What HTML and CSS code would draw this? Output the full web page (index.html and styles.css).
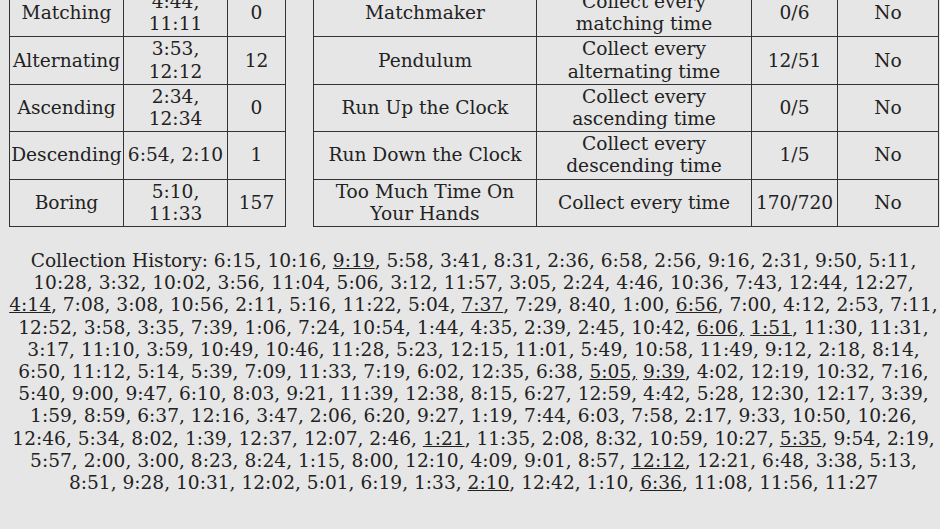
FILE: index.html
```html
<!DOCTYPE html>
<html>
<head>
<meta charset="utf-8">
<link rel="stylesheet" href="styles.css">
</head>
<body>
<div class="page">
  <div class="tables">
    <table class="tbl tbl-left">
      <colgroup><col class="c1"><col class="c2"><col class="c3"></colgroup>
      <tr><td>Matching</td><td>4:44,<br>11:11</td><td>0</td></tr>
      <tr><td>Alternating</td><td>3:53,<br>12:12</td><td>12</td></tr>
      <tr><td>Ascending</td><td>2:34,<br>12:34</td><td>0</td></tr>
      <tr><td>Descending</td><td>6:54, 2:10</td><td>1</td></tr>
      <tr><td>Boring</td><td>5:10,<br>11:33</td><td>157</td></tr>
    </table>
    <table class="tbl tbl-right">
      <colgroup><col class="r1"><col class="r2"><col class="r3"><col class="r4"></colgroup>
      <tr><td>Matchmaker</td><td>Collect every<br>matching time</td><td>0/6</td><td>No</td></tr>
      <tr><td>Pendulum</td><td>Collect every<br>alternating time</td><td>12/51</td><td>No</td></tr>
      <tr><td>Run Up the Clock</td><td>Collect every<br>ascending time</td><td>0/5</td><td>No</td></tr>
      <tr><td>Run Down the Clock</td><td>Collect every<br>descending time</td><td>1/5</td><td>No</td></tr>
      <tr><td>Too Much Time On<br>Your Hands</td><td>Collect every time</td><td>170/720</td><td>No</td></tr>
    </table>
  </div>
  <p class="history">Collection History: 6:15, 10:16, <u>9:19</u>, 5:58, 3:41, 8:31, 2:36, 6:58, 2:56, 9:16, 2:31, 9:50, 5:11,<br>10:28, 3:32, 10:02, 3:56, 11:04, 5:06, 3:12, 11:57, 3:05, 2:24, 4:46, 10:36, 7:43, 12:44, 12:27,<br><u>4:14</u>, 7:08, 3:08, 10:56, 2:11, 5:16, 11:22, 5:04, <u>7:37</u>, 7:29, 8:40, 1:00, <u>6:56</u>, 7:00, 4:12, 2:53, 7:11,<br>12:52, 3:58, 3:35, 7:39, 1:06, 7:24, 10:54, 1:44, 4:35, 2:39, 2:45, 10:42, <u>6:06,</u> <u>1:51</u>, 11:30, 11:31,<br>3:17, 11:10, 3:59, 10:49, 10:46, 11:28, 5:23, 12:15, 11:01, 5:49, 10:58, 11:49, 9:12, 2:18, 8:14,<br>6:50, 11:12, 5:14, 5:39, 7:09, 11:33, 7:19, 6:02, 12:35, 6:38, <u>5:05,</u> <u>9:39</u>, 4:02, 12:19, 10:32, 7:16,<br>5:40, 9:00, 9:47, 6:10, 8:03, 9:21, 11:39, 12:38, 8:15, 6:27, 12:59, 4:42, 5:28, 12:30, 12:17, 3:39,<br>1:59, 8:59, 6:37, 12:16, 3:47, 2:06, 6:20, 9:27, 1:19, 7:44, 6:03, 7:58, 2:17, 9:33, 10:50, 10:26,<br>12:46, 5:34, 8:02, 1:39, 12:37, 12:07, 2:46, <u>1:21</u>, 11:35, 2:08, 8:32, 10:59, 10:27, <u>5:35</u>, 9:54, 2:19,<br>5:57, 2:00, 3:00, 8:23, 8:24, 1:15, 8:00, 12:10, 4:09, 9:01, 8:57, <u>12:12</u>, 12:21, 6:48, 3:38, 5:13,<br>8:51, 9:28, 10:31, 12:02, 5:01, 6:19, 1:33, <u>2:10</u>, 12:42, 1:10, <u>6:36</u>, 11:08, 11:56, 11:27</p>
</div>
</body>
</html>
```

FILE: styles.css
```css
html, body {
  margin: 0;
  padding: 0;
  background: #e6e6e6;
}
body {
  font-family: "DejaVu Serif", serif;
  font-size: 18.6px;
  color: #222;
  overflow: hidden;
}
.page {
  margin-top: -11px;
  padding: 0 2px 0 9px;
}
.tables {
  display: flex;
  align-items: flex-start;
  gap: 27px;
}
.tbl {
  border-collapse: collapse;
  table-layout: fixed;
}
.tbl td {
  border: 1.5px solid #333;
  padding: 1px 0;
  text-align: center;
  vertical-align: middle;
  line-height: 22.2px;
  height: 44.35px;
  white-space: nowrap;
}
.tbl-left { width: 277px; }
.tbl-right { width: 626px; }
.c1 { width: 114px; }
.c2 { width: 104px; }
.c3 { width: 58px; }
.r1 { width: 223px; }
.r2 { width: 215px; }
.r3 { width: 86px; }
.r4 { width: 101px; }
.history {
  margin: 23px 0 0;
  text-align: center;
  line-height: 22.2px;
  white-space: nowrap;
}
```
